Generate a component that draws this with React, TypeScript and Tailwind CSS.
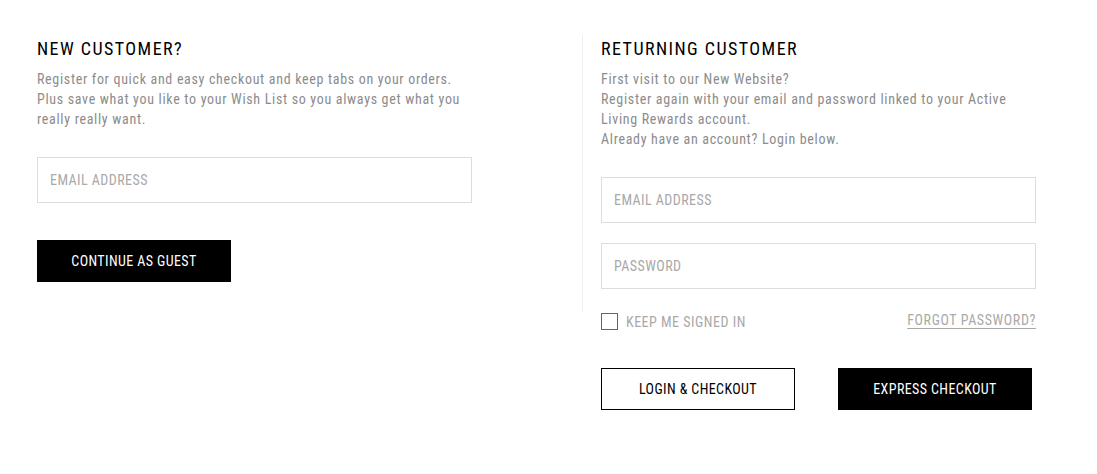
import { useState } from "react";

const font = "font-['Roboto_Condensed','Liberation_Sans',sans-serif]";

const Field = ({ placeholder, type = "text" }: { placeholder: string; type?: string }) => (
  <input
    type={type}
    placeholder={placeholder}
    className="block w-full h-[46px] px-[12px] border border-[#dddddd] bg-white text-[14px] tracking-[0.45px] text-[#333] placeholder:text-[#a9a9a9] focus:outline-none"
  />
);

export default function App() {
  const [keep, setKeep] = useState(false);

  return (
    <div className={`${font} bg-white w-[1097px] h-[474px] flex pl-[37px] pt-[35px]`}>
      <section className="w-[435px] pt-[4px]">
        <h2 className="text-[18px] leading-[20px] tracking-[1.45px] text-black">NEW CUSTOMER?</h2>
        <p className="mt-[10px] text-[14px] leading-[20px] tracking-[0.68px] text-[#8c8c8c]">
          Register for quick and easy checkout and keep tabs on your orders.
          <br />
          Plus save what you like to your Wish List so you always get what you really really want.
        </p>
        <div className="mt-[28px]">
          <Field placeholder="EMAIL ADDRESS" type="email" />
        </div>
        <button className="mt-[37px] w-[194px] h-[42px] bg-black text-white text-[14px] tracking-[0.4px]">
          CONTINUE AS GUEST
        </button>
      </section>

      <div className="ml-[110px] w-px h-[277px] bg-[#eeeeee]" />

      <section className="ml-[18px] w-[435px] pt-[4px]">
        <h2 className="text-[18px] leading-[20px] tracking-[1.45px] text-black">RETURNING CUSTOMER</h2>
        <p className="mt-[10px] text-[14px] leading-[20px] tracking-[0.68px] text-[#8c8c8c]">
          First visit to our New Website?
          <br />
          Register again with your email and password linked to your Active Living Rewards account.
          <br />
          Already have an account? Login below.
        </p>
        <div className="mt-[28px] flex flex-col gap-[20px]">
          <Field placeholder="EMAIL ADDRESS" type="email" />
          <Field placeholder="PASSWORD" type="password" />
        </div>
        <div className="mt-[23px] flex items-center justify-between">
          <label className="flex items-center gap-[8px] cursor-pointer">
            <span
              onClick={() => setKeep(!keep)}
              className="w-[17px] h-[17px] border border-[#666] flex items-center justify-center text-[12px] leading-none"
            >
              {keep ? "✓" : ""}
            </span>
            <span className="text-[14px] leading-[17px] tracking-[0.5px] text-[#a9a9a9] mt-[2px]">KEEP ME SIGNED IN</span>
          </label>
          <a href="#" className="-mt-[2px] text-[14px] leading-[17px] tracking-[0.6px] text-[#a9a9a9] underline underline-offset-[3px]">
            FORGOT PASSWORD?
          </a>
        </div>
        <div className="mt-[37px] flex gap-[43px]">
          <button className="w-[194px] h-[42px] border border-black bg-white text-black text-[14px] tracking-[0.4px]">
            LOGIN &amp; CHECKOUT
          </button>
          <button className="w-[194px] h-[42px] bg-black text-white text-[14px] tracking-[0.4px]">
            EXPRESS CHECKOUT
          </button>
        </div>
      </section>
    </div>
  );
}
